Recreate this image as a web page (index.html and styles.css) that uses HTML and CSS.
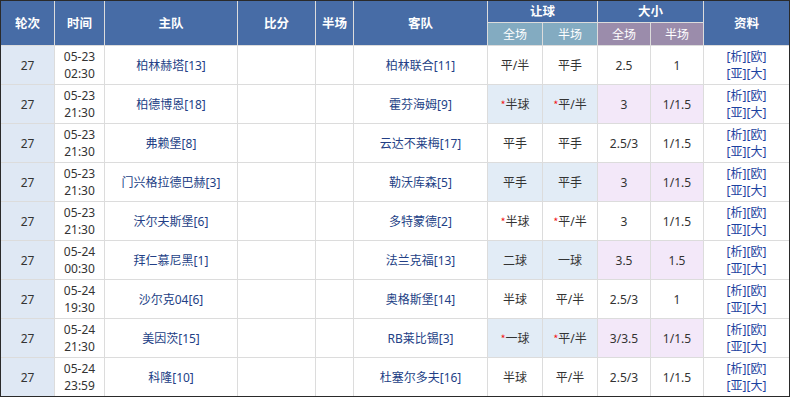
FILE: index.html
```html
<!DOCTYPE html>
<html lang="zh-CN">
<head>
<meta charset="utf-8">
<title>赛程</title>
<link rel="stylesheet" href="styles.css">
</head>
<body>
<div class="board">
  <div class="hd r2">轮次</div>
  <div class="hd r2">时间</div>
  <div class="hd r2">主队</div>
  <div class="hd r2">比分</div>
  <div class="hd r2">半场</div>
  <div class="hd r2">客队</div>
  <div class="hd c2">让球</div>
  <div class="hd c2">大小</div>
  <div class="hd r2">资料</div>
  <div class="sub sub-a">全场</div>
  <div class="sub sub-a">半场</div>
  <div class="sub sub-b">全场</div>
  <div class="sub sub-b">半场</div>

  <div class="cell rnd">27</div>
  <div class="cell stack"><span>05-23</span><span>02:30</span></div>
  <div class="cell team">柏林赫塔[13]</div>
  <div class="cell"></div>
  <div class="cell"></div>
  <div class="cell team">柏林联合[11]</div>
  <div class="cell">平/半</div>
  <div class="cell">平手</div>
  <div class="cell">2.5</div>
  <div class="cell">1</div>
  <div class="cell stack info"><span>[析][欧]</span><span>[亚][大]</span></div>

  <div class="cell rnd">27</div>
  <div class="cell stack"><span>05-23</span><span>21:30</span></div>
  <div class="cell team">柏德博恩[18]</div>
  <div class="cell"></div>
  <div class="cell"></div>
  <div class="cell team">霍芬海姆[9]</div>
  <div class="cell hl-a"><span><i class="star">*</i>半球</span></div>
  <div class="cell hl-a"><span><i class="star">*</i>平/半</span></div>
  <div class="cell hl-b">3</div>
  <div class="cell hl-b">1/1.5</div>
  <div class="cell stack info"><span>[析][欧]</span><span>[亚][大]</span></div>

  <div class="cell rnd">27</div>
  <div class="cell stack"><span>05-23</span><span>21:30</span></div>
  <div class="cell team">弗赖堡[8]</div>
  <div class="cell"></div>
  <div class="cell"></div>
  <div class="cell team">云达不莱梅[17]</div>
  <div class="cell">平手</div>
  <div class="cell">平手</div>
  <div class="cell">2.5/3</div>
  <div class="cell">1/1.5</div>
  <div class="cell stack info"><span>[析][欧]</span><span>[亚][大]</span></div>

  <div class="cell rnd">27</div>
  <div class="cell stack"><span>05-23</span><span>21:30</span></div>
  <div class="cell team">门兴格拉德巴赫[3]</div>
  <div class="cell"></div>
  <div class="cell"></div>
  <div class="cell team">勒沃库森[5]</div>
  <div class="cell hl-a">平手</div>
  <div class="cell hl-a">平手</div>
  <div class="cell hl-b">3</div>
  <div class="cell hl-b">1/1.5</div>
  <div class="cell stack info"><span>[析][欧]</span><span>[亚][大]</span></div>

  <div class="cell rnd">27</div>
  <div class="cell stack"><span>05-23</span><span>21:30</span></div>
  <div class="cell team">沃尔夫斯堡[6]</div>
  <div class="cell"></div>
  <div class="cell"></div>
  <div class="cell team">多特蒙德[2]</div>
  <div class="cell"><span><i class="star">*</i>半球</span></div>
  <div class="cell"><span><i class="star">*</i>平/半</span></div>
  <div class="cell">3</div>
  <div class="cell">1/1.5</div>
  <div class="cell stack info"><span>[析][欧]</span><span>[亚][大]</span></div>

  <div class="cell rnd">27</div>
  <div class="cell stack"><span>05-24</span><span>00:30</span></div>
  <div class="cell team">拜仁慕尼黑[1]</div>
  <div class="cell"></div>
  <div class="cell"></div>
  <div class="cell team">法兰克福[13]</div>
  <div class="cell hl-a">二球</div>
  <div class="cell hl-a">一球</div>
  <div class="cell hl-b">3.5</div>
  <div class="cell hl-b">1.5</div>
  <div class="cell stack info"><span>[析][欧]</span><span>[亚][大]</span></div>

  <div class="cell rnd">27</div>
  <div class="cell stack"><span>05-24</span><span>19:30</span></div>
  <div class="cell team">沙尔克04[6]</div>
  <div class="cell"></div>
  <div class="cell"></div>
  <div class="cell team">奥格斯堡[14]</div>
  <div class="cell">半球</div>
  <div class="cell">平/半</div>
  <div class="cell">2.5/3</div>
  <div class="cell">1</div>
  <div class="cell stack info"><span>[析][欧]</span><span>[亚][大]</span></div>

  <div class="cell rnd">27</div>
  <div class="cell stack"><span>05-24</span><span>21:30</span></div>
  <div class="cell team">美因茨[15]</div>
  <div class="cell"></div>
  <div class="cell"></div>
  <div class="cell team">RB莱比锡[3]</div>
  <div class="cell hl-a"><span><i class="star">*</i>一球</span></div>
  <div class="cell hl-a"><span><i class="star">*</i>平/半</span></div>
  <div class="cell hl-b">3/3.5</div>
  <div class="cell hl-b">1/1.5</div>
  <div class="cell stack info"><span>[析][欧]</span><span>[亚][大]</span></div>

  <div class="cell rnd">27</div>
  <div class="cell stack"><span>05-24</span><span>23:59</span></div>
  <div class="cell team">科隆[10]</div>
  <div class="cell"></div>
  <div class="cell"></div>
  <div class="cell team">杜塞尔多夫[16]</div>
  <div class="cell">半球</div>
  <div class="cell">平/半</div>
  <div class="cell">2.5/3</div>
  <div class="cell">1/1.5</div>
  <div class="cell stack info"><span>[析][欧]</span><span>[亚][大]</span></div>
</div>
</body>
</html>
```

FILE: styles.css
```css
html, body {
  margin: 0;
  padding: 0;
  background: #fff;
}
.board {
  width: 788px;
  border: 1px solid #2a2a2a;
  display: grid;
  grid-template-columns: 53px 49px 132px 77px 37px 133px 54px 54px 52px 52px 85px;
  grid-template-rows: 21px 22px repeat(9, 38px);
  gap: 1px;
  background: #dcdcdc;
  font-family: "Noto Sans", "Noto Sans CJK SC", sans-serif;
  font-size: 12px;
  color: #333;
}
.hd, .sub, .cell {
  display: flex;
  align-items: center;
  justify-content: center;
  text-align: center;
  line-height: 17px;
}
.hd {
  background: #476ca6;
  color: #fff;
  font-weight: bold;
  font-size: 12.5px;
}
.r2 { grid-row: span 2; }
.c2 { grid-column: span 2; }
.sub {
  color: #fff;
}
.sub-a { background: #83abc1; }
.sub-b { background: #9b8cab; }
.cell {
  background: #fff;
}
.stack {
  flex-direction: column;
}
.cell.rnd { background: #dfe8f4; }
.team { color: #233f86; }
.hl-a { background: #e2ecf6; }
.hl-b { background: #f3e8f9; }
.star {
  font-style: normal;
  font-family: "Noto Sans CJK SC", sans-serif;
  font-size: 11px;
  color: #f21b1b;
}
.info { color: #1d42a0; }
```
